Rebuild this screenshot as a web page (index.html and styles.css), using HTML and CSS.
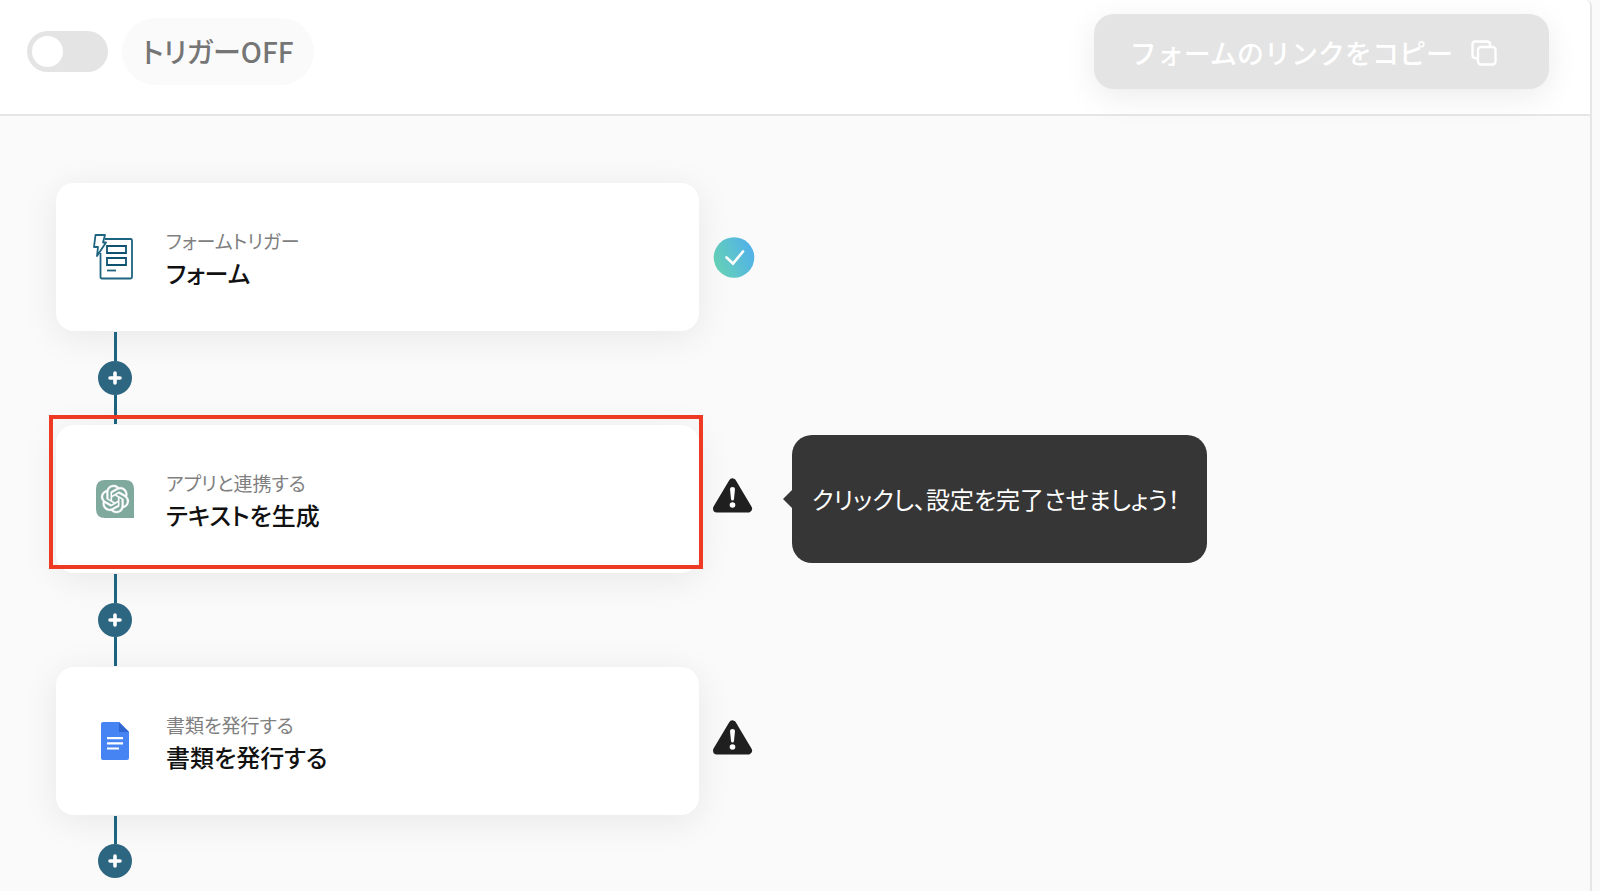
FILE: index.html
```html
<!DOCTYPE html>
<html lang="ja">
<head>
    <meta charset="UTF-8">
    <meta name="viewport" content="width=device-width, initial-scale=1.0">
    <title>フォームトリガー</title>
    <link rel="stylesheet" href="styles.css">
</head>
<body>
    <div class="panel">
        <header class="header">
            <div class="trigger">
                <input type="checkbox" class="switch" id="trigger-switch">
                <label class="trigger-label" for="trigger-switch">トリガーOFF</label>
            </div>
            <button type="button" class="copy-button" disabled>
                <span>フォームのリンクをコピー</span>
                <svg width="26" height="26" viewBox="0 0 26 26" fill="none" stroke="currentColor" stroke-width="2.400" stroke-linejoin="round">
                    <rect x="7" y="7" width="17.500" height="17.500" rx="3"/>
                    <path d="M7 18.500H6Q5 18.500 4.500 18Q1.500 18 1.500 15V4.500Q1.500 1.500 4.500 1.500H16Q19 1.500 19 4.500V7"/>
                </svg>
            </button>
        </header>

        <main class="flow">
            <div class="step">
                <a class="card" href="#form">
                    <span class="card-icon">
                        <svg width="44" height="48" viewBox="0 0 44 48" fill="none" stroke="#1d6480" stroke-width="1.800" stroke-linejoin="round">
                            <path d="M12 6H37.500Q39 6 39 7.500V44Q39 45.500 37.500 45.500H9Q7.500 45.500 7.500 44V20"/>
                            <path d="M2.500 2H12L10 9.500H13L4 23L5 14H1Z" fill="#fff"/>
                            <path d="M14 13H33V20H14ZM14 25H33V32H14Z" stroke="#0e5270" stroke-linejoin="miter"/>
                            <path d="M14 37.500H23"/>
                        </svg>
                    </span>
                    <span class="card-text">
                        <span class="card-type">フォームトリガー</span>
                        <span class="card-title">フォーム</span>
                    </span>
                </a>
                <svg class="status" width="42" height="42" viewBox="0 0 42 42">
                    <defs>
                        <linearGradient id="done" x1="0" y1="0.7" x2="1" y2="0.3">
                            <stop offset="0" stop-color="#68d3b6"/>
                            <stop offset="1" stop-color="#4fb0ea"/>
                        </linearGradient>
                    </defs>
                    <circle cx="21" cy="21.500" r="20.300" fill="url(#done)"/>
                    <path d="M13.500 21.500L20 27.500L30 15.500" fill="none" stroke="#fff" stroke-width="2.600" stroke-linecap="round" stroke-linejoin="miter"/>
                </svg>
            </div>

            <div class="connector">
                <button type="button" class="add" aria-label="追加">
                    <svg width="14" height="14" viewBox="0 0 14 14" stroke="#fff" stroke-width="3.600" stroke-linecap="round"><path d="M7 2V12M2 7H12"/></svg>
                </button>
            </div>

            <div class="step">
                <a class="card card-selected" href="#text">
                    <span class="card-icon">
                        <svg width="38" height="38" viewBox="0 0 38 38">
                            <path d="M9 0H29Q38 0 38 9V38H9Q0 38 0 29V9Q0 0 9 0Z" fill="#80a99d"/>
                            <g transform="translate(5 5) scale(1.167)">
                                <path fill="#fff" stroke="#fff" stroke-width=".3" d="M22.2819 9.8211a5.9847 5.9847 0 0 0-.5157-4.9108 6.0462 6.0462 0 0 0-6.5098-2.9A6.0651 6.0651 0 0 0 4.9807 4.1818a5.9847 5.9847 0 0 0-3.9977 2.9 6.0462 6.0462 0 0 0 .7427 7.0966 5.98 5.98 0 0 0 .511 4.9107 6.051 6.051 0 0 0 6.5146 2.9001A5.9847 5.9847 0 0 0 13.2599 24a6.0557 6.0557 0 0 0 5.7718-4.2058 5.9894 5.9894 0 0 0 3.9977-2.9001 6.0557 6.0557 0 0 0-.7475-7.073zm-9.022 12.6081a4.4755 4.4755 0 0 1-2.8764-1.0408l.1419-.0804 4.7783-2.7582a.7948.7948 0 0 0 .3927-.6813v-6.7369l2.02 1.1686a.071.071 0 0 1 .038.052v5.5826a4.504 4.504 0 0 1-4.4945 4.4944zm-9.6607-4.1254a4.4708 4.4708 0 0 1-.5346-3.0137l.142.0852 4.783 2.7582a.7712.7712 0 0 0 .7806 0l5.8428-3.3685v2.3324a.0804.0804 0 0 1-.0332.0615L9.74 19.9502a4.4992 4.4992 0 0 1-6.1408-1.6464zM2.3408 7.8956a4.485 4.485 0 0 1 2.3655-1.9728V11.6a.7664.7664 0 0 0 .3879.6765l5.8144 3.3543-2.0201 1.1685a.0757.0757 0 0 1-.071 0l-4.8303-2.7865A4.504 4.504 0 0 1 2.3408 7.872zm16.5963 3.8558L13.1038 8.364 15.1192 7.2a.0757.0757 0 0 1 .071 0l4.8303 2.7913a4.4944 4.4944 0 0 1-.6765 8.1042v-5.6772a.79.79 0 0 0-.407-.667zm2.0107-3.0231l-.142-.0852-4.7735-2.7818a.7759.7759 0 0 0-.7854 0L9.409 9.2297V6.8974a.0662.0662 0 0 1 .0284-.0615l4.8303-2.7866a4.4992 4.4992 0 0 1 6.6802 4.66zM8.3065 12.863l-2.02-1.1638a.0804.0804 0 0 1-.038-.0567V6.0742a4.4992 4.4992 0 0 1 7.3757-3.4537l-.142.0805L8.704 5.459a.7948.7948 0 0 0-.3927.6813zm1.0976-2.3654l2.602-1.4998 2.6069 1.4998v2.9994l-2.5974 1.4997-2.6067-1.4997Z"/>
                            </g>
                        </svg>
                    </span>
                    <span class="card-text">
                        <span class="card-type">アプリと連携する</span>
                        <span class="card-title">テキストを生成</span>
                    </span>
                </a>
                <svg class="status" width="42" height="42" viewBox="0 0 42 42">
                    <path d="M19.500 4.500L35 30.500H4Z" fill="#202020" stroke="#202020" stroke-width="8" stroke-linejoin="round"/>
                    <path d="M17 11Q17 9 19.500 9T22 11L21 21Q20.800 22.500 19.500 22.500T18 21Z" fill="#fff"/>
                    <circle cx="19.500" cy="27" r="2.800" fill="#fff"/>
                </svg>
                <div class="tooltip">クリックし、設定を完了させましょう！</div>
            </div>

            <div class="connector">
                <button type="button" class="add" aria-label="追加">
                    <svg width="14" height="14" viewBox="0 0 14 14" stroke="#fff" stroke-width="3.600" stroke-linecap="round"><path d="M7 2V12M2 7H12"/></svg>
                </button>
            </div>

            <div class="step">
                <a class="card" href="#document">
                    <span class="card-icon">
                        <svg width="28" height="38" viewBox="0 0 28 38">
                            <path d="M2 0H18L28 10V36Q28 38 26 38H2Q0 38 0 36V2Q0 0 2 0Z" fill="#4684f4"/>
                            <path d="M18 0L28 10H18Z" fill="#2f66d0"/>
                            <path d="M6 15H22V17.200H6ZM6 20.200H22V22.400H6ZM6 25.400H18V27.600H6Z" fill="#fff"/>
                        </svg>
                    </span>
                    <span class="card-text">
                        <span class="card-type">書類を発行する</span>
                        <span class="card-title">書類を発行する</span>
                    </span>
                </a>
                <svg class="status" width="42" height="42" viewBox="0 0 42 42">
                    <path d="M19.500 4.500L35 30.500H4Z" fill="#202020" stroke="#202020" stroke-width="8" stroke-linejoin="round"/>
                    <path d="M17 11Q17 9 19.500 9T22 11L21 21Q20.800 22.500 19.500 22.500T18 21Z" fill="#fff"/>
                    <circle cx="19.500" cy="27" r="2.800" fill="#fff"/>
                </svg>
            </div>

            <div class="connector connector-last">
                <button type="button" class="add" aria-label="追加">
                    <svg width="14" height="14" viewBox="0 0 14 14" stroke="#fff" stroke-width="3.600" stroke-linecap="round"><path d="M7 2V12M2 7H12"/></svg>
                </button>
            </div>
        </main>
    </div>
</body>
</html>
```
FILE: styles.css
```css
* { box-sizing: border-box; }
body {
    margin: 0;
    background: #fafafa;
    color: #111;
    font-family: "Noto Sans CJK JP", sans-serif;
    font-feature-settings: "palt";
}
button { font: inherit; border: 0; padding: 0; }
svg { display: block; flex: none; }

.panel {
    min-height: 100vh;
    margin-right: 8px;
    border-right: 2px solid #e6e6e6;
    border-top-right-radius: 6px;
    background: #fafafa;
}

/* Header */
.header {
    display: flex;
    justify-content: space-between;
    align-items: flex-start;
    height: 116px;
    padding: 14px 41px 0 27px;
    border-bottom: 2px solid #e6e6e6;
    border-top-right-radius: 6px;
    background: #fff;
}
.trigger { display: flex; align-items: center; gap: 14px; padding-top: 4px; }
.switch {
    appearance: none;
    width: 81px;
    height: 41px;
    margin: 0;
    padding: 5px;
    border-radius: 21px;
    background: #e4e4e4;
}
.switch::before {
    content: "";
    display: block;
    width: 31px;
    height: 31px;
    border-radius: 50%;
    background: #fff;
}
.switch:checked { background: #2c6680; }
.switch:checked::before { margin-left: auto; }
.trigger-label {
    padding: 0 20px;
    border-radius: 34px;
    background: #fafafa;
    color: #757575;
    font-size: 28px;
    font-weight: 500;
    line-height: 67px;
}
.copy-button {
    display: flex;
    align-items: center;
    gap: 18px;
    height: 75px;
    padding: 2px 52px 0 36px;
    border-radius: 20px;
    background: #e4e4e4;
    box-shadow: 0 8px 32px rgba(0, 0, 0, 0.08);
    color: #fff;
    font-size: 27px;
    font-weight: 500;
    font-feature-settings: normal;
}

/* Steps */
.flow { padding: 67px 56px 0; }
.step { display: flex; align-items: center; }
.card {
    position: relative;
    display: flex;
    align-items: center;
    gap: 29px;
    flex: 0 1 643px;
    height: 148px;
    padding: 0 37px;
    border-radius: 18px;
    background: #fff;
    box-shadow: 0 6px 36px rgba(0, 0, 0, 0.08);
    color: inherit;
    text-decoration: none;
}
.card-selected::after {
    content: "";
    position: absolute;
    inset: -10px -4px 4px -7px;
    border: 4px solid #ee3a22;
}
.card-icon { display: flex; justify-content: center; width: 44px; }
.card-text { display: flex; flex-direction: column; }
.card-type { color: #808080; font-size: 19px; font-weight: 400; line-height: 32px; }
.card-title { font-size: 24px; font-weight: 500; line-height: 32px; }
.status { margin-left: 14px; }
.tooltip {
    position: relative;
    margin-left: 37px;
    padding: 0 27px 0 20px;
    border-radius: 20px;
    background: #363636;
    color: #fff;
    font-size: 24px;
    line-height: 128px;
    white-space: nowrap;
}
.tooltip::before {
    content: "";
    position: absolute;
    top: 54px;
    left: -9px;
    width: 10px;
    height: 20px;
    background: #363636;
    clip-path: polygon(0 50%, 100% 0, 100% 100%);
}

/* Line with the add button between two steps */
.connector {
    position: relative;
    display: flex;
    flex-direction: column;
    align-items: center;
    width: 34px;
    height: 94px;
    margin-left: 42px;
    padding: 1px 0;
}
.connector::before, .connector::after { content: ""; flex: 1; width: 3px; background: #1d6480; }
.connector-last { height: 64px; }
.connector-last::after { display: none; }
.add {
    display: flex;
    align-items: center;
    justify-content: center;
    width: 34px;
    height: 34px;
    border-radius: 50%;
    background: #2c6680;
}
```
